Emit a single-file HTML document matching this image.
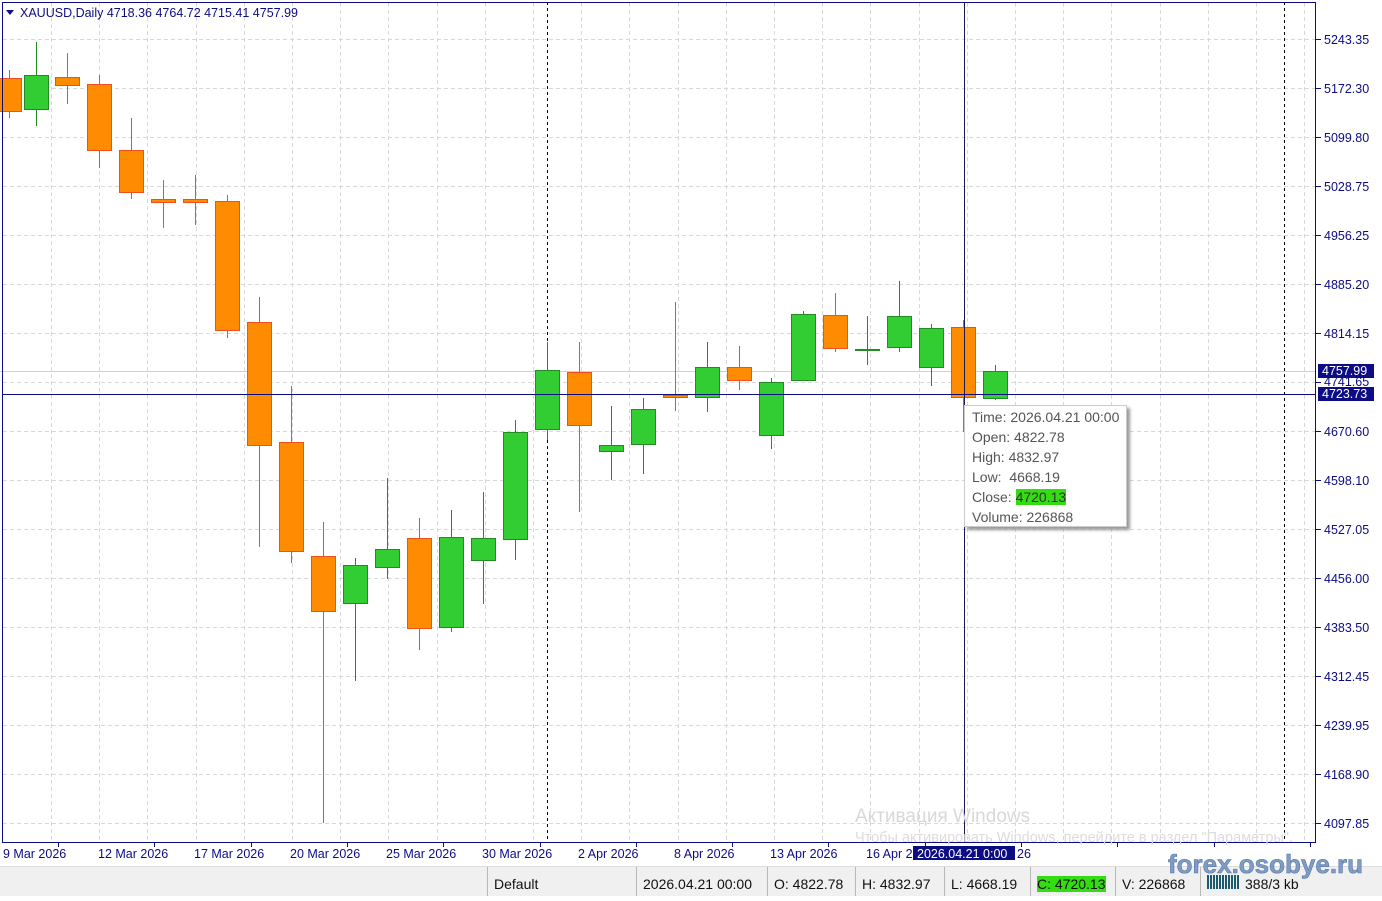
<!DOCTYPE html>
<html><head><meta charset="utf-8"><style>
body{margin:0;width:1382px;height:895px;overflow:hidden;background:#fff;font-family:"Liberation Sans",sans-serif}
svg{position:absolute;left:0;top:0}
.ax{font-size:12.5px;fill:#0c0c84}
.st{position:absolute;top:866px;left:0;width:1382px;height:29px;background:#f0f0f0;border-top:1px solid #ddd}
.st div{position:absolute;top:0;height:29px;line-height:34px;font-size:14px;color:#111;border-left:1px solid #b8b8b8;padding-left:6px;box-sizing:border-box}
.tt{position:absolute;left:964px;top:405px;width:163px;height:122px;background:#fff;border:1px solid #ccc;box-shadow:3px 3px 3px #999;font-size:14px;color:#555;line-height:20px;padding:1px 0 0 7px;box-sizing:border-box}
.wm{position:absolute;left:1168px;top:849px;font-size:26px;font-weight:bold;color:#7f9cc4;-webkit-text-stroke:0.6px #5a78a8;z-index:5}
</style></head><body>
<svg id="c" width="1382" height="866" xmlns="http://www.w3.org/2000/svg">
<rect x="0" y="0" width="1382" height="866" fill="#fff"/>
<g id="grid"></g>
<line x1="0" y1="371.5" x2="1316" y2="371.5" stroke="#d0d0d0"/>
<line x1="547.5" y1="2" x2="547.5" y2="842" stroke="#000" stroke-dasharray="3,3"/>
<line x1="1284.5" y1="2" x2="1284.5" y2="842" stroke="#000" stroke-dasharray="3,3"/>
<g id="cand"></g>
<line x1="964.5" y1="2" x2="964.5" y2="842" stroke="#1a1a50"/>
<line x1="2" y1="394.5" x2="1316" y2="394.5" stroke="#0c0c84"/>
<rect x="2.5" y="2.5" width="1313" height="840" fill="none" stroke="#0c0c84"/>
<path d="M6 10 L14 10 L10 15 Z" fill="#0c0c84"/>
<text x="20" y="17" class="ax">XAUUSD,Daily  4718.36 4764.72 4715.41 4757.99</text>
<g class="ax">
<text x="1324" y="44">5243.35</text><text x="1324" y="93">5172.30</text><text x="1324" y="142">5099.80</text><text x="1324" y="191">5028.75</text><text x="1324" y="240">4956.25</text><text x="1324" y="289">4885.20</text><text x="1324" y="338">4814.15</text><text x="1324" y="386">4741.65</text><text x="1324" y="436">4670.60</text><text x="1324" y="485">4598.10</text><text x="1324" y="534">4527.05</text><text x="1324" y="583">4456.00</text><text x="1324" y="632">4383.50</text><text x="1324" y="681">4312.45</text><text x="1324" y="730">4239.95</text><text x="1324" y="779">4168.90</text><text x="1324" y="828">4097.85</text>
</g>
<rect x="1318" y="364" width="56" height="14" fill="#0c0c84"/><text x="1322" y="375" font-size="12.5" fill="#fff">4757.99</text>
<rect x="1318" y="387" width="56" height="14" fill="#0c0c84"/><text x="1322" y="398" font-size="12.5" fill="#fff">4723.73</text>
<g class="ax">
<text x="3" y="858">9 Mar 2026</text><text x="98" y="858">12 Mar 2026</text><text x="194" y="858">17 Mar 2026</text><text x="290" y="858">20 Mar 2026</text><text x="386" y="858">25 Mar 2026</text><text x="482" y="858">30 Mar 2026</text><text x="578" y="858">2 Apr 2026</text><text x="674" y="858">8 Apr 2026</text><text x="770" y="858">13 Apr 2026</text><text x="866" y="858">16 Apr 2</text><text x="1017" y="858">26</text>
</g>
<rect x="913" y="846" width="102" height="14" fill="#0c0c84"/><text x="917" y="858" font-size="12.5" fill="#fff">2026.04.21 0:00</text>
<text x="855" y="822" font-size="19" fill="#d8d8d8">Активация Windows</text>
<text x="855" y="842" font-size="14.5" fill="#dcdcdc">Чтобы активировать Windows, перейдите в раздел "Параметры".</text>
</svg>
<div class="tt">Time: 2026.04.21 00:00<br>Open: 4822.78<br>High: 4832.97<br>Low:&nbsp; 4668.19<br>Close: <span style="background:#33dd11;color:#333">4720.13</span><br>Volume: 226868</div>
<div class="st">
<div style="left:487px;width:149px">Default</div>
<div style="left:636px;width:131px">2026.04.21 00:00</div>
<div style="left:767px;width:88px">O: 4822.78</div>
<div style="left:855px;width:89px">H: 4832.97</div>
<div style="left:944px;width:86px">L: 4668.19</div>
<div style="left:1030px;width:85px"><span style="background:#33dd11">C: 4720.13</span></div>
<div style="left:1115px;width:85px">V: 226868</div>
<div style="left:1200px;width:182px;padding-left:44px"><span style="position:absolute;left:6px;top:8px;width:32px;height:14px;background:repeating-linear-gradient(90deg,#1e5a6e 0 2px,#f0f0f0 2px 3px)"></span>388/3 kb</div>
</div>
<div class="wm">forex.osobye.ru</div>
<script>
var g='';
for(var x=51;x<1316;x+=48.2)g+='<line x1="'+Math.round(x)+'.5" y1="3" x2="'+Math.round(x)+'.5" y2="842" stroke="#d8d8d8" stroke-dasharray="4,3"/>';
for(var i=0;i<17;i++){var y=Math.round(39+i*49.0);g+='<line x1="3" y1="'+y+'.5" x2="1316" y2="'+y+'.5" stroke="#d8d8d8" stroke-dasharray="4,3"/>';g+='<line x1="1316" y1="'+y+'.5" x2="1321" y2="'+y+'.5" stroke="#0c0c84"/>';}
for(var x=58;x<1316;x+=96.3)g+='<line x1="'+Math.round(x)+'.5" y1="842" x2="'+Math.round(x)+'.5" y2="847" stroke="#0c0c84"/>';
document.getElementById('grid').innerHTML=g;
var C=[[9,78,111,70,118,0],[36,75,109,42,126,1],[67,77,85,53,104,0],[99,84,150,75,168,0],[131,150,192,118,199,0],[163,199,202,180,228,0],[195,199,202,175,225,0],[227,201,330,195,338,0],[259,322,445,297,547,0],[291,442,551,386,563,0],[323,556,611,522,823,0],[355,565,603,558,681,1],[387,549,567,478,579,1],[419,538,628,518,650,0],[451,537,627,510,632,1],[483,538,560,492,604,1],[515,432,539,420,560,1],[547,370,429,342,440,1],[579,372,425,342,512,0],[611,445,451,406,480,1],[643,409,444,398,474,1],[675,395,397,302,411,0],[707,367,397,342,412,1],[739,367,380,346,390,0],[771,382,435,378,449,1],[803,314,380,311,380,1],[835,315,348,293,352,0],[867,349,350,316,365,1],[899,316,347,281,352,1],[931,328,367,324,386,1],[963,327,397,320,432,0],[995,371,398,365,400,1]];
var s='';
C.forEach(function(c){var f=c[5]?'#32cd32':'#ff8c00',k=c[5]?'#228b22':'#f0501e';var x=c[0];
s+='<line x1="'+(x+.5)+'" y1="'+c[3]+'" x2="'+(x+.5)+'" y2="'+c[4]+'" stroke="'+k+'"/>';
s+='<rect x="'+(x-11.5)+'" y="'+(c[1]+.5)+'" width="24" height="'+Math.max(1,c[2]-c[1])+'" fill="'+f+'" stroke="'+k+'"/>';});
document.getElementById('cand').innerHTML=s;
</script>
</body></html>
